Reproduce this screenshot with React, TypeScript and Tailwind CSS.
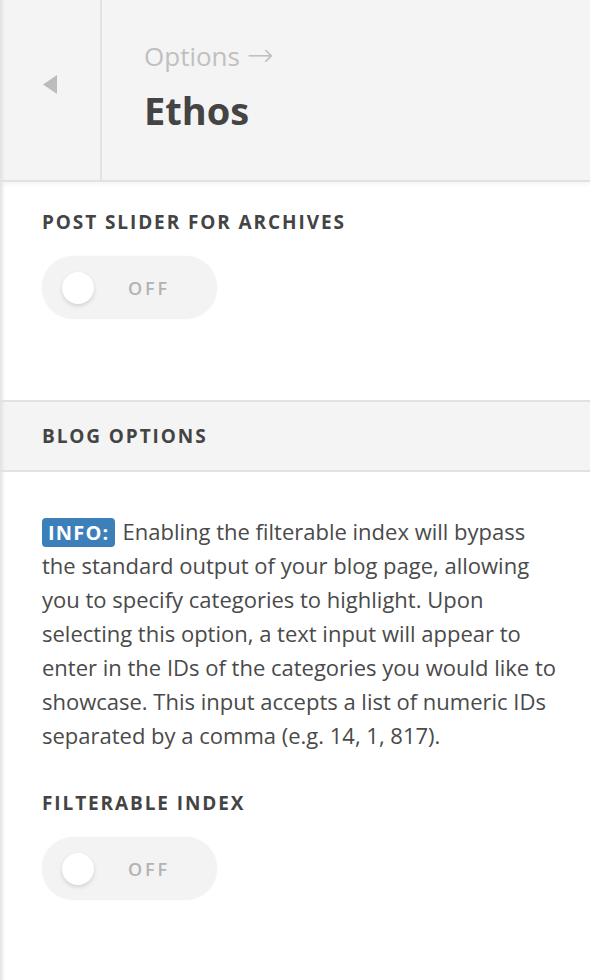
import React from 'react'

const Toggle = () => (
  <div className="flex h-[63px] w-[175px] items-center rounded-full bg-[#f3f3f3] pl-[20px] shadow-[0_0_2px_rgba(0,0,0,0.06)]">
    <div className="h-[32px] w-[32px] rounded-full bg-white shadow-[0_2px_4px_rgba(0,0,0,0.14)]" />
    <span className="ml-[34px] text-[18px] font-semibold leading-none tracking-[0.16em] text-[#b3b3b3]">OFF</span>
  </div>
)

const Label = ({ children }: { children: React.ReactNode }) => (
  <h3 className="text-[19px] font-bold uppercase leading-none tracking-[0.1em] text-[#444]">{children}</h3>
)

export default function App() {
  return (
    <div className="relative min-h-screen bg-white font-['Open_Sans',sans-serif]">
      {/* left edge shade */}
      <div className="pointer-events-none absolute inset-y-0 left-0 z-20 w-[5px] bg-linear-to-r from-[#e2e2e2] to-transparent" />

      {/* Header */}
      <div className="relative z-10 flex h-[182px] border-b-2 border-[#e2e2e2] bg-[#f4f4f4] shadow-[0_2px_6px_rgba(0,0,0,0.05)]">
        <div className="w-[102px] border-r-2 border-[#e2e2e2] pl-[43px] pt-[75px]">
          <svg width="14" height="19" viewBox="0 0 14 19">
            <polygon points="14,0 14,19 0,9.5" fill="#bcbcbc" />
          </svg>
        </div>
        <div className="pl-[42px] pt-[43px]">
          <div className="h-[26px] text-[26px] leading-none text-[#c0c0c0]">
            Options <span className="font-['DejaVu_Sans',sans-serif] text-[32px] font-extralight leading-[0]">→</span>
          </div>
          <h1 className="mt-[22px] text-[38px] font-bold leading-none text-[#444]">Ethos</h1>
        </div>
      </div>

      {/* Post slider */}
      <div className="px-[42px] pb-[81px] pt-[31px]">
        <Label>Post Slider for Archives</Label>
        <div className="mt-[24px]">
          <Toggle />
        </div>
      </div>

      {/* Blog options header */}
      <div className="flex h-[72px] items-center border-y-2 border-[#e2e2e2] bg-[#f4f4f4] px-[42px]">
        <Label>Blog Options</Label>
      </div>

      {/* Blog options body */}
      <div className="pl-[42px] pr-[10px] pt-[42px]">
        <p className="whitespace-nowrap text-[22px] leading-[34px] text-[#4a4a4a]">
          <span className="mr-[7px] inline-block rounded-[4px] bg-[#3d7fb9] px-[6px] text-[20px] font-bold leading-[29px] tracking-[0.06em] text-white">INFO:</span>
          Enabling the filterable index will bypass
          <br />
          the standard output of your blog page, allowing
          <br />
          you to specify categories to highlight. Upon
          <br />
          selecting this option, a text input will appear to
          <br />
          enter in the IDs of the categories you would like to
          <br />
          showcase. This input accepts a list of numeric IDs
          <br />
          separated by a comma (e.g. 14, 1, 817).
        </p>
        <div className="mt-[42px]">
          <Label>Filterable Index</Label>
        </div>
        <div className="mt-[24px] pb-[79px]">
          <Toggle />
        </div>
      </div>
    </div>
  )
}
